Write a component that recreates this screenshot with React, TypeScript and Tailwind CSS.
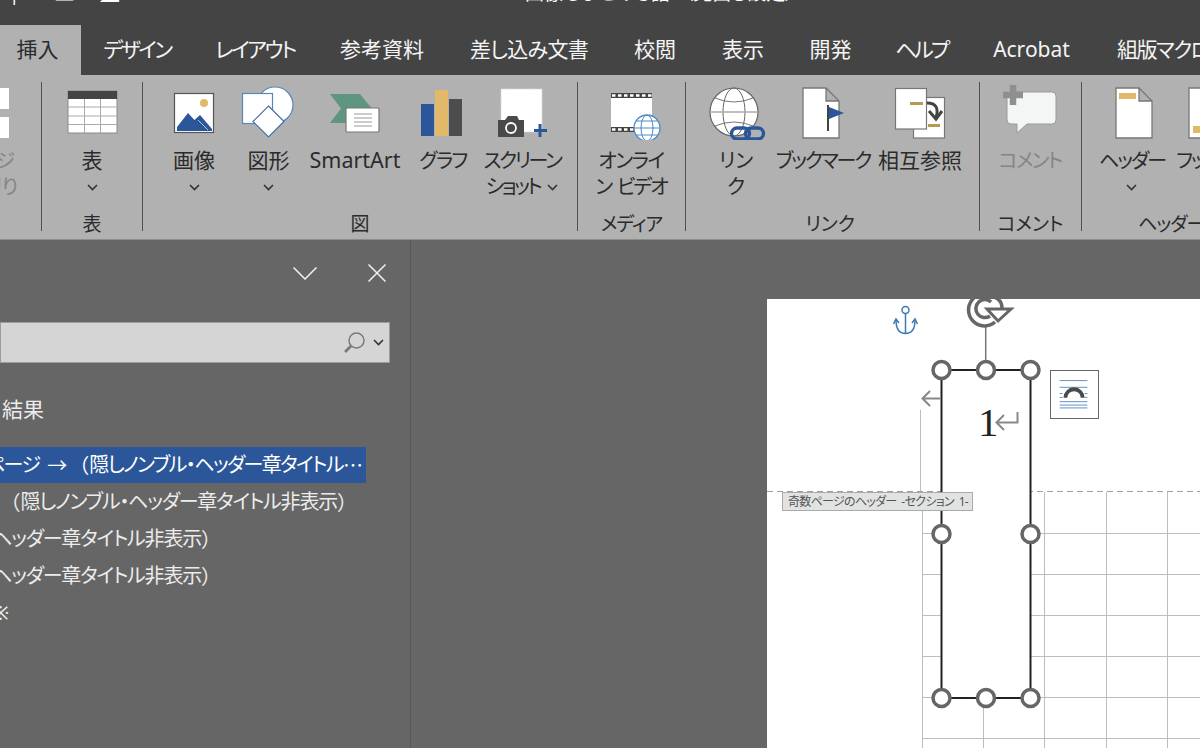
import type { ReactNode } from 'react'

const tabs = [
  { label: 'デザイン', w: 'w-[112px] tracking-[-2.5px]' },
  { label: 'レイアウト', w: 'w-[124px] tracking-[-2.4px]' },
  { label: '参考資料', w: 'w-[130px]' },
  { label: '差し込み文書', w: 'w-[164px] tracking-[-0.7px]' },
  { label: '校閲', w: 'w-[88px]' },
  { label: '表示', w: 'w-[88px]' },
  { label: '開発', w: 'w-[87px]' },
  { label: 'ヘルプ', w: 'w-[95px] tracking-[-2.7px]' },
  { label: 'Acrobat', w: 'w-[125px]' },
]

function Chevron({ className = '' }: { className?: string }) {
  return (
    <svg className={className} width="11" height="7" viewBox="0 0 11 7" fill="none" stroke="#333" strokeWidth="1.6">
      <path d="M1 1l4.5 4.5L10 1" />
    </svg>
  )
}

function Divider() {
  return <div className="w-px flex-none mt-[7px] mb-[8px] bg-[#505050]" />
}

function Group({ label, className, labelClass = 'text-center', children }: { label: string; className: string; labelClass?: string; children: ReactNode }) {
  return (
    <div className={'flex flex-col justify-between flex-none pt-[9px] pb-[3px] ' + className}>
      <div className="flex">{children}</div>
      <div className={'text-[19px] leading-[24px] text-[#2b2b2b] whitespace-nowrap ' + labelClass}>{label}</div>
    </div>
  )
}

function Button({ w, view, lines, chevron, dim, children }: { w: string; view: string; lines: ReactNode[]; chevron?: boolean; dim?: boolean; children: ReactNode }) {
  return (
    <div className={'flex flex-col items-center flex-none whitespace-nowrap ' + w + (dim ? ' text-[#858585]' : ' text-[#2b2b2b]')}>
      <svg className="w-[60px] h-[56px] flex-none" viewBox={view}>{children}</svg>
      <div className="mt-[8px] text-[20px] leading-[26px] text-center flex flex-col items-center">
        {lines.map((l, i) => <div key={i}>{l}</div>)}
        {chevron && <div className="h-[26px] flex items-center"><Chevron /></div>}
      </div>
    </div>
  )
}

function Big({ children }: { children: string }) {
  return <span className="block text-[21px] -translate-y-px">{children}</span>
}

function Doc({ x }: { x: number }) {
  return (
    <path d={`M${x} 88H${x + 23}L${x + 36} 101V138H${x}Z M${x + 23} 88V101H${x + 36}`} fill="#fff" stroke="#777" strokeWidth="1.3" />
  )
}

function Ribbon() {
  return (
    <div className="flex h-[165px] flex-none bg-[#b1b1b1] border-b border-[#8d8d8d] overflow-hidden">
      <div className="w-[41px] flex-none pt-[9px] pr-[23px] flex flex-col items-end text-[#858585] text-[20px] leading-[26px] overflow-hidden whitespace-nowrap">
        <div className="h-[56px] flex flex-col gap-[8px] pt-[4px] self-start">
          <div className="w-[9px] h-[21px] bg-white" />
          <div className="w-[9px] h-[21px] bg-white" />
        </div>
        <div className="mt-[8px] mr-[3px]">ジ</div>
        <div>切り</div>
      </div>
      <Divider />
      <Group label="表" className="w-[100px]">
        <Button w="w-[100px]" view="62 84 60 56" lines={[<Big key="a">表</Big>]} chevron>
          <rect x="68" y="91" width="49" height="42" fill="#fff" stroke="#8a8a8a" />
          <rect x="68" y="91" width="49" height="8" fill="#444" />
          <path d="M84.5 99V133M100.5 99V133M68 107H117M68 116H117M68 124.5H117" stroke="#aaa" fill="none" />
        </Button>
      </Group>
      <Divider />
      <Group label="図" className="w-[434px] pl-[14px]" labelClass="text-center -ml-[14px]">
        <Button w="w-[74px]" view="164 84 60 56" lines={[<Big key="a">画像</Big>]} chevron>
          <rect x="174.5" y="93.5" width="39" height="39" fill="#fff" stroke="#555" strokeWidth="1.2" />
          <circle cx="204" cy="103" r="4" fill="#e2b968" />
          <path d="M177 131V127L188 113L194.5 120L200 115L212 129V131Z" fill="#2b579a" />
          <path d="M198 120L208 130" stroke="#b9c6dc" fill="none" />
        </Button>
        <Button w="w-[75px]" view="239 84 60 56" lines={[<Big key="a">図形</Big>]} chevron>
          <circle cx="275" cy="105" r="18" fill="#fff" stroke="#5a86b8" strokeWidth="1.2" />
          <rect x="242.5" y="93.5" width="30" height="30" fill="#fff" stroke="#5a86b8" strokeWidth="1.2" />
          <path d="M268.5 106L284 121.5L268.5 137L253 121.5Z" fill="#fff" stroke="#44709f" strokeWidth="1.2" />
        </Button>
        <Button w="w-[98px]" view="325 84 60 56" lines={[<span key="a" className="block text-[21.5px] -translate-y-px">SmartArt</span>]}>
          <path d="M330 94H360L373 110L360 123H330L341 108.5Z" fill="#5f9680" />
          <rect x="346" y="108" width="33" height="24" rx="1" fill="#fff" stroke="#777" strokeWidth="1.2" />
          <path d="M354 114H372M354 118H372M354 122H372M354 126H372" stroke="#999" />
        </Button>
        <Button w="w-[78px]" view="413 84 60 56" lines={[<span key="a" className="tracking-[-1.6px]">グラフ</span>]}>
          <rect x="421" y="104" width="13" height="32" fill="#2b579a" />
          <rect x="435" y="90" width="13" height="46" fill="#e2b968" />
          <rect x="449" y="99" width="13" height="37" fill="#4d4d4d" />
        </Button>
        <Button w="w-[80px]" view="492 84 60 56" lines={[<span key="a" className="tracking-[-2.4px]">スクリーン</span>, <span key="s" className="inline-flex items-center gap-[7px] tracking-[-2.5px]">ショット<Chevron /></span>]}>
          <rect x="501" y="89" width="41" height="43" fill="#fff" stroke="#d8d8d8" strokeDasharray="2 1" />
          <path d="M498 120H505L508 116H517L519 120H524V137H498Z" fill="#4a4a4a" />
          <circle cx="511" cy="128" r="5" fill="none" stroke="#fff" strokeWidth="1.8" />
          <path d="M540 124V137M534 130.5H547" stroke="#2b579a" strokeWidth="3" />
        </Button>
      </Group>
      <Divider />
      <Group label="メディア" className="w-[107px] tracking-[-1px]">
        <Button w="w-[106px]" view="601 84 60 56" lines={[<span key="a" className="tracking-[-1.5px]">オンライ</span>, <span key="b" className="tracking-[-2px]">ン<span className="ml-[6px]">ビデオ</span></span>]}>
          <rect x="611" y="93" width="41" height="39" fill="#fff" />
          <path d="M611 95.5H652M611 129.5H652" stroke="#444" strokeWidth="5" />
          <path d="M612 95.5H652M612 129.5H640" stroke="#fff" strokeWidth="2.5" strokeDasharray="3.5 2.5" />
          <circle cx="647" cy="128" r="13" fill="#fff" stroke="#4f8ac9" strokeWidth="1.3" />
          <ellipse cx="647" cy="128" rx="6" ry="13" fill="none" stroke="#4f8ac9" />
          <path d="M634 128H660M636 121H658M636 135H658" stroke="#4f8ac9" fill="none" />
        </Button>
      </Group>
      <Divider />
      <Group label="リンク" className="w-[293px] pl-[25px]" labelClass="text-center -ml-[25px] pr-[5px]">
        <Button w="w-[50px]" view="706 84 60 56" lines={['リン', 'ク']}>
          <circle cx="734" cy="112" r="24" fill="#fff" stroke="#666" strokeWidth="1.2" />
          <ellipse cx="734" cy="112" rx="11" ry="24" fill="none" stroke="#666" />
          <path d="M710 112H758" stroke="#aaa" strokeWidth="1.5" />
          <path d="M715 98Q734 106 753 98M715 126Q734 118 753 126" stroke="#777" fill="none" />
          <rect x="731.5" y="128" width="18" height="11" rx="5.5" fill="none" stroke="#2b579a" strokeWidth="3.4" />
          <rect x="745.5" y="128" width="18" height="11" rx="5.5" fill="none" stroke="#2b579a" strokeWidth="3.4" />
        </Button>
        <Button w="w-[124px]" view="793 84 60 56" lines={[<span key="a" className="tracking-[-2px]">ブックマーク</span>]}>
          <Doc x={803} />
          <path d="M828 105V131" stroke="#444" strokeWidth="2" />
          <path d="M829 107L844 113L829 119Z" fill="#2b579a" />
        </Button>
        <Button w="w-[70px]" view="890 84 60 56" lines={[<Big key="a">相互参照</Big>]}>
          <rect x="913.5" y="97.5" width="31" height="40.5" fill="#fff" stroke="#777" strokeWidth="1.2" />
          <rect x="895.5" y="88.5" width="31" height="40.5" fill="#fff" stroke="#777" strokeWidth="1.2" />
          <path d="M910 103.5H923M928 125.5H940" stroke="#b59a4f" strokeWidth="3" />
          <path d="M927 103C936 103 939 108 936 118" fill="none" stroke="#444" strokeWidth="3" />
          <path d="M929 111L936 119L942 111" fill="none" stroke="#444" strokeWidth="3" />
        </Button>
      </Group>
      <Divider />
      <Group label="コメント" className="w-[101px]">
        <Button w="w-[100px]" view="1000 84 60 56" lines={[<span key="a" className="tracking-[-1.7px]">コメント</span>]} dim>
          <path d="M1011 92H1052Q1056 92 1056 96V120Q1056 124 1052 124H1027L1017 133V124H1011Q1007 124 1007 120V96Q1007 92 1011 92Z" fill="#f4f6f5" stroke="#999" />
          <path d="M1013 85V105M1003 95H1023" stroke="#8f8f8f" strokeWidth="6.5" />
        </Button>
      </Group>
      <Divider />
      <Group label="ヘッダーとフッター" className="w-[300px]" labelClass="text-left pl-[56px] tracking-[-1px]">
        <Button w="w-[100px]" view="1102 84 60 56" lines={[<span key="a" className="tracking-[-2px]">ヘッダー</span>]} chevron>
          <Doc x={1116} />
          <rect x="1119" y="93" width="17" height="6" fill="#e2b968" />
        </Button>
        <Button w="w-[50px]" view="1177 84 60 56" lines={[<span key="a" className="tracking-[-2px]">フッター</span>]}>
          <Doc x={1189} />
          <rect x="1193" y="126" width="17" height="7" fill="#e2b968" />
        </Button>
      </Group>
    </div>
  )
}

function Row({ w, active, children }: { w: string; active?: boolean; children: ReactNode }) {
  return (
    <div className={'h-9 flex items-center justify-end overflow-hidden whitespace-pre text-[20px] ' + w + (active ? ' bg-[#2b579a] text-white' : ' text-[#ececec]')}>
      {children}
    </div>
  )
}

// full-width glyphs, palt would squeeze them
function Wide({ children, className = '' }: { children: string; className?: string }) {
  return <span className={"[font-family:'Noto_Sans_CJK_JP',sans-serif] [font-feature-settings:normal] tracking-normal " + className}>{children}</span>
}

function NavPanel() {
  return (
    <div className="w-[411px] flex-none border-r border-[#575757] flex flex-col">
      <div className="h-[66px] flex items-center justify-end gap-[51px] pr-[24px]">
        <svg width="24" height="13" viewBox="0 0 24 13" fill="none" stroke="#f2f2f2" strokeWidth="1.5"><path d="M0.5 0.5L12 12L23.5 0.5" /></svg>
        <svg width="18" height="18" viewBox="0 0 18 18" fill="none" stroke="#f2f2f2" strokeWidth="1.5"><path d="M0.5 0.5L17.5 17.5M17.5 0.5L0.5 17.5" /></svg>
      </div>
      <div className="mt-[16px] w-[390px] h-[41px] bg-[#d5d5d5] border border-[#9c9c9c] flex items-center justify-end gap-[8px] pr-[5px]">
        <svg width="22" height="22" viewBox="0 0 22 22" fill="none">
          <circle cx="13.5" cy="8.5" r="7.5" stroke="#777" strokeWidth="1.4" />
          <path d="M8 14L2 20" stroke="#777" strokeWidth="2.6" />
        </svg>
        <Chevron />
      </div>
      <div className="mt-[31px] ml-[2px] h-[30px] leading-[30px] text-[21px] text-[#ececec]">結果</div>
      <div className="mt-[23px] flex flex-col gap-px">
        <Row w="w-[366px] pr-[3px] tracking-[-1.6px]" active>
          ページ<Wide className="ml-[8px] mr-[2px]">→</Wide><Wide>（</Wide>隠しノンブル・ヘッダー章タイトル<Wide>…</Wide>
        </Row>
        <Row w="w-[357px] tracking-[-1.2px]"><Wide>（</Wide>隠しノンブル・ヘッダー章タイトル非表示<Wide>）</Wide></Row>
        <Row w="w-[221px] tracking-[-1.2px]">ヘッダー章タイトル非表示<Wide>）</Wide></Row>
        <Row w="w-[221px] tracking-[-1.2px]">ヘッダー章タイトル非表示<Wide>）</Wide></Row>
        <Row w="w-[9px]">※</Row>
      </div>
    </div>
  )
}

function Page() {
  const gridY = [533, 574, 615, 656, 697, 738]
  const gridX = [1044, 1106, 1167]
  const handles = [
    [941.5, 370], [986, 370], [1030.5, 370],
    [941.5, 534], [1030.5, 534],
    [941.5, 698], [986, 698], [1030.5, 698],
  ]
  return (
    <div className="relative flex-1 bg-white overflow-hidden">
      <svg className="absolute inset-0 w-full h-full" viewBox="767 299 433 449">
        <path d="M920.5 410V492M922.5 492V748M983.5 698V748" stroke="#bdbdbd" fill="none" />
        {gridX.map(x => <path key={x} d={`M${x}.5 492V748`} stroke="#bdbdbd" fill="none" />)}
        {gridY.map(y => <path key={y} d={`M922 ${y}.5H1200`} stroke="#bdbdbd" fill="none" />)}
        <path d="M767 491.5H1200" stroke="#a0a0a0" strokeDasharray="6 4" fill="none" />
        <path d="M941.5 370H1030.5V698H941.5Z" fill="#fff" stroke="#222" strokeWidth="2" />
        <path d="M985.7 327V361" stroke="#777" strokeWidth="1.5" />
        <path d="M995 322A16 16 0 1 1 994 297Q1002 300 1002 308" fill="none" stroke="#666" strokeWidth="3.5" />
        <path d="M990 316A9 9 0 1 1 991 302" fill="none" stroke="#666" strokeWidth="3.5" />
        <path d="M987 309H1011L998 321Z" fill="#fff" stroke="#666" strokeWidth="3" />
        {handles.map(([x, y]) => <circle key={x + '-' + y} cx={x} cy={y} r="8.5" fill="#fff" stroke="#666" strokeWidth="3.5" />)}
        <circle cx="905.5" cy="310" r="3.5" fill="none" stroke="#3d7ab5" strokeWidth="1.5" />
        <path d="M905.5 314V333.5M896 320Q896 333.5 905.5 333.5T915 320" fill="none" stroke="#3d7ab5" strokeWidth="1.5" />
        <path d="M893.5 324L896 319L899 323M912 323L915 319L917.5 324" fill="none" stroke="#3d7ab5" strokeWidth="1.5" />
        <path d="M940 398.5H923M930 391L922.5 398.5L930 406" fill="none" stroke="#888" strokeWidth="2" />
        <path d="M1017.5 412V422.5H997M1004 415L996.5 422.5L1004 430" fill="none" stroke="#888" strokeWidth="2" />
      </svg>
      <div className="absolute left-[211px] top-[100px] text-[41px] leading-[46px] text-[#222] [font-family:'Liberation_Serif',serif]">1</div>
      <div className="absolute left-[283px] top-[71px] w-[49px] h-[49px] bg-white border border-[#666]">
        <svg className="w-full h-full" viewBox="0 0 49 49" fill="none">
          <path d="M9 10H38M9 17H38M9 32H38M9 35.5H38M9 38.5H38" stroke="#5b8ec5" />
          <path d="M9 23.5H12M35 23.5H38M9 27.5H12M35 27.5H38" stroke="#5b8ec5" />
          <path d="M15 28A9 9 0 0 1 33 28" stroke="#4a4a4a" strokeWidth="4" />
        </svg>
      </div>
      <div className="absolute left-[15px] top-[193px] w-[191px] h-[19px] bg-[#e1e3e2] border border-[#aaa] text-[#555] text-[12px] leading-[17px] pl-[5px] whitespace-pre tracking-[-0.7px]">
        奇数ページのヘッダー  -セクション  1-
      </div>
    </div>
  )
}

export default function App() {
  return (
    <div className="w-[1200px] h-[748px] overflow-hidden flex flex-col bg-[#666] [font-family:'Noto_Sans','Noto_Sans_CJK_JP',sans-serif] [font-feature-settings:'palt']">
      <div className="h-[25px] flex-none bg-[#444] overflow-hidden text-white text-[19px] leading-[24px]">
        <div className="flex h-[24px] -mt-[19px]">
          <span className="ml-[9px] w-[46px]">|</span>
          <span className="w-[45px]">亚</span>
          <span className="w-[377px]">◢</span>
          <span className="whitespace-pre">Word画像もまとめる語？（見出し設定）.docx   -   Word</span>
        </div>
      </div>
      <div className="h-[50px] flex-none bg-[#444] flex text-[#f4f4f4] text-[21px] whitespace-nowrap overflow-hidden">
        <div className="w-[81px] flex-none bg-[#b1b1b1] text-[#2b2b2b] flex items-center justify-center pr-[6px]">挿入</div>
        {tabs.map(t => (
          <div key={t.label} className={'flex-none flex items-center justify-center ' + t.w}>{t.label}</div>
        ))}
        <div className="flex items-center pl-[23px] tracking-[-1.5px]">組版マクロ</div>
      </div>
      <Ribbon />
      <div className="flex flex-1 min-h-0 bg-[#666]">
        <NavPanel />
        <div className="flex-1 flex pl-[356px] pt-[59px]">
          <Page />
        </div>
      </div>
    </div>
  )
}
